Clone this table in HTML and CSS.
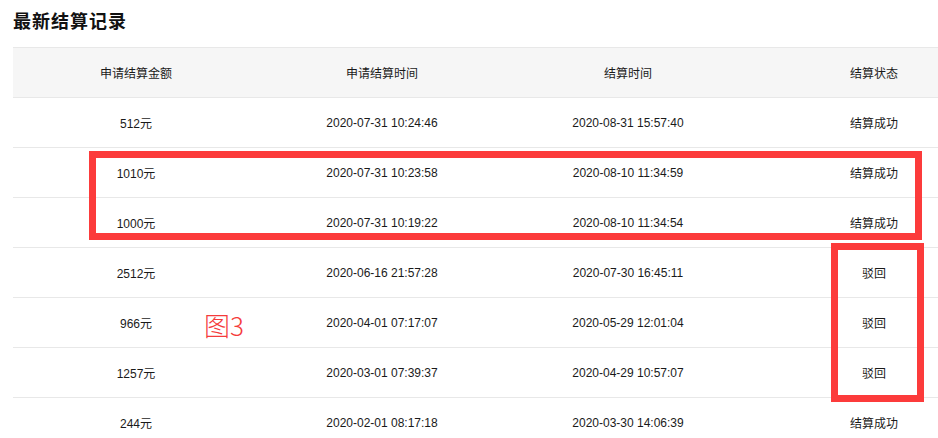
FILE: index.html
```html
<!DOCTYPE html>
<html>
<head>
<meta charset="utf-8">
<link rel="stylesheet" href="styles.css">
</head>
<body>
<div class="page">
  <h2 class="title">最新结算记录</h2>
  <div class="table-clip">
    <div class="table">
      <div class="row head">
        <div class="cell">申请结算金额</div>
        <div class="cell">申请结算时间</div>
        <div class="cell">结算时间</div>
        <div class="cell">结算状态</div>
      </div>
      <div class="row"><div class="cell">512元</div><div class="cell">2020-07-31 10:24:46</div><div class="cell">2020-08-31 15:57:40</div><div class="cell">结算成功</div></div>
      <div class="row"><div class="cell">1010元</div><div class="cell">2020-07-31 10:23:58</div><div class="cell">2020-08-10 11:34:59</div><div class="cell">结算成功</div></div>
      <div class="row"><div class="cell">1000元</div><div class="cell">2020-07-31 10:19:22</div><div class="cell">2020-08-10 11:34:54</div><div class="cell">结算成功</div></div>
      <div class="row"><div class="cell">2512元</div><div class="cell">2020-06-16 21:57:28</div><div class="cell">2020-07-30 16:45:11</div><div class="cell">驳回</div></div>
      <div class="row"><div class="cell">966元</div><div class="cell">2020-04-01 07:17:07</div><div class="cell">2020-05-29 12:01:04</div><div class="cell">驳回</div></div>
      <div class="row"><div class="cell">1257元</div><div class="cell">2020-03-01 07:39:37</div><div class="cell">2020-04-29 10:57:07</div><div class="cell">驳回</div></div>
      <div class="row"><div class="cell">244元</div><div class="cell">2020-02-01 08:17:18</div><div class="cell">2020-03-30 14:06:39</div><div class="cell">结算成功</div></div>
    </div>
  </div>
  <div class="mark mark-rows"></div>
  <div class="mark mark-status"></div>
  <div class="fig-label">图3</div>
</div>
</body>
</html>
```
FILE: styles.css
```css
html, body {
  margin: 0;
  padding: 0;
  overflow: hidden;
  background: #fff;
}
body {
  width: 938px;
  height: 438px;
  font-family: "Liberation Sans", Arial, "Noto Sans CJK SC", sans-serif;
  color: #1a1a1a;
}
.page {
  position: relative;
  height: 438px;
  overflow: hidden;
  padding: 8px 0 0 13px;
  box-sizing: border-box;
}
.title {
  margin: 0 0 15px 0;
  font-size: 18px;
  line-height: 24px;
  font-weight: bold;
  letter-spacing: 1px;
  color: #111;
  font-family: "Noto Sans CJK SC", sans-serif;
}
.table-clip {
  width: 925px;
  overflow: hidden;
}
.table {
  width: 984px;
  font-size: 12px;
}
.row {
  display: grid;
  grid-template-columns: repeat(4, 1fr);
  height: 49px;
  border-bottom: 1px solid #e8e8e8;
  align-items: center;
  text-align: center;
}
.row.head {
  background: #f6f6f6;
  border-top: 1px solid #e8e8e8;
}
.cell {
  white-space: nowrap;
}
.mark {
  position: absolute;
  border: 7px solid #fc3b3b;
  box-sizing: border-box;
}
.mark-rows {
  left: 89px;
  top: 151px;
  width: 833px;
  height: 89px;
}
.mark-status {
  left: 831px;
  top: 243px;
  width: 93px;
  height: 159px;
}
.fig-label {
  position: absolute;
  left: 204px;
  top: 308px;
  font-size: 26px;
  line-height: 34px;
  color: #f53b3b;
  font-family: "Noto Sans CJK SC", sans-serif;
  font-weight: 300;
}
```
